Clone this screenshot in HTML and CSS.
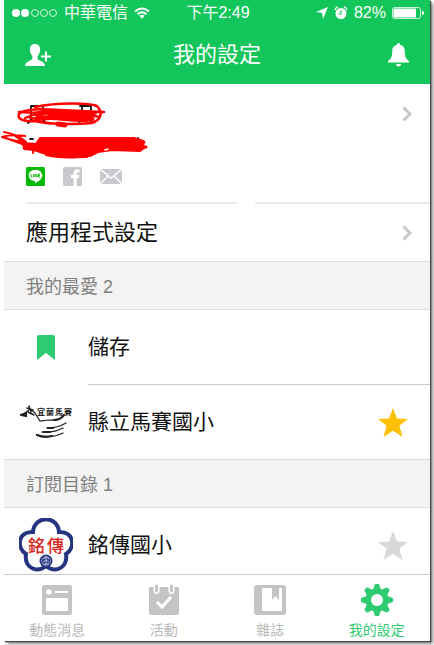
FILE: index.html
```html
<!DOCTYPE html>
<html lang="zh-Hant">
<head>
    <meta charset="UTF-8" />
    <meta name="viewport" content="width=device-width, initial-scale=1">
    <title>我的設定</title>
    <link rel="stylesheet" href="styles.css">
</head>
<body>
    <div class="phone">
        <header>
            <div class="status-bar">
                <div class="status-left">
                    <svg width="46" height="10" viewBox="0 0 46 10" fill="none" stroke="#fff">
                        <circle cx="4" cy="5" r="4" fill="#fff" stroke="none" />
                        <circle cx="13" cy="5" r="4" fill="#fff" stroke="none" />
                        <circle cx="23" cy="5" r="3.5" stroke-width=".8" />
                        <circle cx="32" cy="5" r="3.5" stroke-width=".8" />
                        <circle cx="41" cy="5" r="3.5" stroke-width=".8" />
                    </svg>
                    <span>中華電信</span>
                    <svg width="16" height="12" viewBox="0 0 16 12" fill="none" stroke="#fff" stroke-width="2">
                        <path d="M1 4.5Q8-1.5 15 4.5M3.5 7.2Q8 3.2 12.5 7.2" />
                        <path d="M5.3 8.8Q8 6.6 10.7 8.8L8 11.8Z" fill="#fff" stroke="none" />
                    </svg>
                </div>
                <time>下午2:49</time>
                <div class="status-right">
                    <svg width="12" height="12" viewBox="0 0 12 12" fill="#fff">
                        <path d="M12 0L7 12L6 6L0 5Z" />
                    </svg>
                    <svg width="14" height="14" viewBox="0 0 14 14" fill="none" stroke="#fff">
                        <circle cx="7" cy="7.5" r="5.5" fill="#fff" stroke="none" />
                        <path d="M1 4Q1.5 1.5 4 1M10 1Q12.5 1.5 13 4" stroke-width="1.3" />
                        <path d="M7 4.5V8H4.5" stroke="#13c65b" stroke-width="1.2" />
                    </svg>
                    <span>82%</span>
                    <svg width="32" height="12" viewBox="0 0 32 12">
                        <rect x=".5" y=".5" width="28" height="11" rx="2" fill="none" stroke="#fff" stroke-width=".8" />
                        <rect x="1.5" y="1.5" width="22.5" height="9" rx="1" fill="#fff" />
                        <path d="M30 4Q32 4 32 6T30 8Z" fill="#fff" />
                    </svg>
                </div>
            </div>
            <div class="title-bar">
                <button type="button" aria-label="加入好友">
                    <svg width="26" height="22" viewBox="0 0 26 22" fill="#fff">
                        <path d="M10 0C6.5 0 4.7 2.3 4.9 5.6C5 8.5 6 10.5 7.3 12V15C7.3 16.5 0 17 0 22H20C20 17 12.7 16.5 12.7 15V12C14 10.5 15 8.5 15.1 5.6C15.3 2.3 13.5 0 10 0Z" />
                        <path d="M20 7.5H22V11.5H26V13.5H22V17.5H20V13.5H16V11.5H20Z" />
                    </svg>
                </button>
                <h1>我的設定</h1>
                <button type="button" aria-label="通知">
                    <svg width="21" height="24" viewBox="0 0 21 24" fill="#fff">
                        <path d="M10.5 0C9.5 0 9 .7 9 1.7C5.5 2.5 4.2 5 4.2 8.5C4.2 14 3 16 0 18V19.5H21V18C18 16 16.8 14 16.8 8.5C16.8 5 15.5 2.5 12 1.7C12 .7 11.5 0 10.5 0Z" />
                        <path d="M7.8 21H13.2Q12.5 23.5 10.5 23.5T7.8 21Z" />
                    </svg>
                </button>
            </div>
        </header>

        <main>
            <a class="profile" href="#profile" aria-label="個人資料">
                <svg class="scribble" width="150" height="66" viewBox="0 0 150 66" fill="none" stroke="#f00" stroke-linecap="round" stroke-linejoin="round">
                    <path d="M31 7V22M31 7H43V12M28 24L32 20M46 24L42 20M80 7H91M82 7V22M91 7V24M79 24L82 20M138 39V44M30 40H33" stroke="#111" stroke-width="1.8" />
                    <path d="M35 8C58 3 90 4 97 7C105 16 98 22 92 24C72 26 47 25 35 22C20 23 16 18 20 14C30 7 55 12 104 13M19 13C45 15 74 11 99 18M25 19C43 10 70 12 96 14C75 18 50 22 30 19" stroke-width="2.5" />
                    <path d="M37 15C57 9 74 16 91 14M37 20C56 15 69 23 90 20M45 13L92 20M58 25L65 26" stroke-width="5" />
                    <path d="M4 33C15 35 22 39 26 43C15 43 8 40 2 38C7 36 18 36 25 37M3 38L25 46M14 36L28 47M33 50V54M46 56C60 60 75 58 87 58" stroke-width="2" />
                    <path d="M40 39H134L143 42L144 49L140 52L112 51L98 53L90 57L60 58L46 55L34 51L24 50L23 44L36 45Z" fill="#f00" stroke-width="2" />
                    <path d="M138 43H144M141 49L146 48" stroke-width="3" />
                    <path d="M105 51L108 50" stroke="#fff" stroke-width="1.5" />
                </svg>
                <span class="accounts">
                    <svg width="19" height="19" viewBox="0 0 19 19">
                        <rect width="19" height="19" rx="1.5" fill="#00b900" />
                        <path d="M9.5 2.8C5.5 2.8 2.7 5.2 2.7 8.5C2.7 11.5 5.2 13.7 8.4 14.1C9.3 14.3 9 15 8.8 16.3C12 14.8 16.3 12.3 16.3 8.5C16.3 5.2 13.5 2.8 9.5 2.8Z" fill="#fff" />
                        <path d="M5 7V10H6.5M7.7 7V10M9 10V7L11 10V7M14 7H12.4V10H14M12.4 8.5H14" fill="none" stroke="#00b900" stroke-width=".9" />
                    </svg>
                    <svg width="19" height="19" viewBox="0 0 19 19">
                        <rect width="19" height="19" rx="1.5" fill="#c8c8cd" />
                        <path d="M10.5 19V11H8V8H10.5V6C10.5 3.5 12 2.5 14 2.5H16.5V5.5H15C14 5.5 13.7 6 13.7 6.7V8H16.5L16 11H13.7V19Z" fill="#fff" />
                    </svg>
                    <svg width="22" height="15" viewBox="0 0 22 15">
                        <rect width="22" height="15" fill="#c8c8cd" />
                        <path d="M0 0L11 9L22 0M0 15L8 7M22 15L14 7" fill="none" stroke="#fff" stroke-width="1.5" />
                    </svg>
                </span>
                <svg class="chevron" width="10" height="16" viewBox="0 0 10 16"><path d="M1.5 1.5L8 8L1.5 14.5" /></svg>
            </a>
            <div class="split-line"><i></i><i></i></div>
            <a class="setting" href="#settings">
                <span>應用程式設定</span>
                <svg class="chevron" width="10" height="16" viewBox="0 0 10 16"><path d="M1.5 1.5L8 8L1.5 14.5" /></svg>
            </a>

            <h2>我的最愛 2</h2>
            <ul>
                <li>
                    <span class="thumb">
                        <svg width="18" height="25" viewBox="0 0 18 25"><path d="M2 0H16Q18 0 18 2V25L9 18L0 25V2Q0 0 2 0Z" fill="#2ecc71" /></svg>
                    </span>
                    <div class="cell">
                        <a href="#saved">儲存</a>
                    </div>
                </li>
                <li>
                    <span class="thumb">
                        <svg width="52" height="36" viewBox="0 0 52 36">
                            <g fill="none" stroke="#222" stroke-linecap="round">
                                <path d="M5 9L10 5L15 9L20 17L29 16Q39 17 44 11" stroke-width="1.2" />
                                <path d="M34 16Q41 16 44 11" stroke-width="2" />
                                <path d="M1 11L6 9L6 12Z" fill="#222" stroke-width="2" />
                                <path d="M9 2L11 8M7 4L13 6M8 8L14 11" stroke-width="1.5" />
                                <path d="M27 24Q38 24 46 19M22 28Q34 29 43 24M17 31Q31 35 43 29" stroke-width="1.3" />
                                <path d="M17 31Q24 34 32 32M24 28H30M28 24H33" stroke-width="2.2" />
                            </g>
                            <text class="logo-ink" y="11" x="17 26 35 44">宜蘭馬賽</text>
                        </svg>
                    </span>
                    <div class="cell">
                        <a href="#school-masai">縣立馬賽國小</a>
                        <button type="button" class="star on" aria-label="移除最愛">
                            <svg width="32" height="31" viewBox="0 0 32 31"><path d="M16 1L20 11.5L31 12L22.4 18.7L25.5 30L16 23.7L6.5 30L9.6 18.7L1 12L12 11.5Z" /></svg>
                        </button>
                    </div>
                </li>
            </ul>

            <h2>訂閱目錄 1</h2>
            <ul>
                <li>
                    <span class="thumb">
                        <svg width="54" height="54" viewBox="0 0 54 54">
                            <path d="M14 14C15 -3 39 -3 40 14C55 13 57 30 47 36C49 49 37 56 27 48C17 56 5 49 7 36C-3 30 -1 13 14 14Z" fill="#fff" stroke="#26337f" stroke-width="4" />
                            <circle cx="27" cy="43" r="6.5" fill="#26337f" />
                            <circle cx="27" cy="43" r="4.5" fill="none" stroke="#9ba5d0" stroke-width=".8" />
                            <path d="M27 39V47M24 41L27 39L30 41M24 44L27 42L30 44M24 46H30" fill="none" stroke="#c5cbe5" stroke-width=".9" />
                            <text class="logo-red" y="34" x="9 28">銘傳</text>
                        </svg>
                    </span>
                    <div class="cell">
                        <a href="#school-mingchuan">銘傳國小</a>
                        <button type="button" class="star" aria-label="加入最愛">
                            <svg width="32" height="31" viewBox="0 0 32 31"><path d="M16 1L20 11.5L31 12L22.4 18.7L25.5 30L16 23.7L6.5 30L9.6 18.7L1 12L12 11.5Z" /></svg>
                        </button>
                    </div>
                </li>
            </ul>
        </main>

        <nav>
            <a href="#news">
                <svg width="32" height="32" viewBox="0 0 32 32">
                    <rect x="1" y="1" width="30" height="30" rx="2.5" fill="#c4c4c4" />
                    <circle cx="8" cy="8" r="2.8" fill="#fff" />
                    <path d="M14 7H27V9H14ZM5 14H27V27H5Z" fill="#fff" />
                </svg>
                <span>動態消息</span>
            </a>
            <a href="#events">
                <svg width="32" height="32" viewBox="0 0 32 32">
                    <path d="M1 3H31V29Q31 31 29 31H3Q1 31 1 29Z" fill="#c4c4c4" />
                    <path d="M8.5 1V7M23.5 1V7" stroke="#fff" stroke-width="6" stroke-linecap="round" />
                    <path d="M8.5 2V7M23.5 2V7" stroke="#c4c4c4" stroke-width="3" stroke-linecap="round" />
                    <path d="M9 18L14 23L23 13" fill="none" stroke="#fff" stroke-width="3" />
                </svg>
                <span>活動</span>
            </a>
            <a href="#magazine">
                <svg width="32" height="32" viewBox="0 0 32 32">
                    <rect y="1" width="32" height="30" rx="3" fill="#c4c4c4" />
                    <path d="M8 4H18V16L21.5 12L25 16V4H28V27H8Z" fill="#fff" />
                </svg>
                <span>雜誌</span>
            </a>
            <a href="#me" class="active">
                <svg width="32" height="32" viewBox="0 0 32 32">
                    <g fill="#2ecc71">
                        <circle cx="16" cy="16" r="11.5" />
                        <path id="tooth" d="M14 0H18L20 6H12ZM14 32H18L20 26H12Z" />
                        <use href="#tooth" transform="rotate(45 16 16)" />
                        <use href="#tooth" transform="rotate(90 16 16)" />
                        <use href="#tooth" transform="rotate(135 16 16)" />
                    </g>
                    <circle cx="16" cy="16" r="6" fill="#fff" />
                </svg>
                <span>我的設定</span>
            </a>
        </nav>
    </div>
</body>
</html>
```

FILE: styles.css
```css
* {
    box-sizing: border-box;
}

body {
    font-family: "Liberation Sans", "Noto Sans CJK TC", sans-serif;
    margin: 0;
    padding: 0 4px 4px;
    background: #fff;
    color: #111;
}

a {
    color: inherit;
    text-decoration: none;
}

button {
    background: none;
    border: none;
    padding: 0;
    cursor: pointer;
}

svg {
    display: block;
    flex: none;
}

.phone {
    display: flex;
    flex-direction: column;
    height: calc(100vh - 4px);
    background: #fff;
    box-shadow: 1px 1px 1px #444, 3px 3px 3px #888;
}

header {
    background: #13c65b;
    color: #fff;
}

.status-bar {
    display: grid;
    grid-template-columns: 1fr auto 1fr;
    align-items: center;
    height: 26px;
    padding: 0 6px 0 8px;
    font-size: 16px;
    line-height: 24px;
}

.status-left, .status-right {
    display: flex;
    align-items: center;
    gap: 6px;
}

.status-right {
    justify-content: flex-end;
}

.title-bar {
    display: grid;
    grid-template-columns: 1fr auto 1fr;
    align-items: center;
    height: 58px;
    padding: 0 21px;
}

.title-bar button {
    justify-self: start;
}

.title-bar button:last-child {
    justify-self: end;
}

h1 {
    margin: 0;
    font-size: 22px;
    line-height: 58px;
    font-weight: 400;
}

main {
    flex: 1;
    min-height: 0;
    overflow-y: auto;
    scrollbar-width: none;
}

.profile {
    display: flex;
    justify-content: space-between;
    align-items: flex-start;
    height: 118px;
    padding: 22px 18px 16px 22px;
}

/* runs past the left edge of the screen */
.scribble {
    position: absolute;
    top: 99px;
    left: 0;
}

.accounts {
    display: flex;
    align-items: center;
    align-self: flex-end;
    gap: 18px;
}

.chevron {
    fill: none;
    stroke: #c7c7c7;
    stroke-width: 3;
}

.split-line {
    display: flex;
    gap: 18px;
    padding-left: 22px;
}

.split-line i {
    flex: 6;
    height: 2px;
    background: #eaeaea;
}

.split-line i:last-child {
    flex: 5;
}

.setting {
    display: flex;
    align-items: center;
    justify-content: space-between;
    padding: 0 18px 0 22px;
    font-size: 22px;
    line-height: 57px;
}

h2 {
    margin: 0;
    height: 49px;
    line-height: 50px;
    padding-left: 22px;
    background: #f3f3f3;
    border-top: 1px solid #ddd;
    border-bottom: 1px solid #ddd;
    color: #808080;
    font-size: 18px;
    font-weight: 400;
}

ul {
    list-style: none;
    margin: 0;
    padding: 0;
}

li {
    display: flex;
    align-items: center;
}

.thumb {
    display: flex;
    justify-content: center;
    width: 84px;
}

.cell {
    flex: 1;
    display: flex;
    align-items: center;
    justify-content: space-between;
    padding-right: 21px;
    font-size: 21px;
    line-height: 74px;
}

li + li .cell {
    border-top: 1px solid #ccc;
}

.star {
    fill: #d8d8d8;
}

.star.on {
    fill: #ffc107;
}

.logo-ink {
    font-size: 8px;
    font-weight: 700;
    fill: #222;
}

.logo-red {
    font-family: "Noto Sans CJK TC", sans-serif;
    font-size: 17px;
    font-weight: 500;
    fill: #d9261c;
}

nav {
    display: grid;
    grid-template-columns: repeat(4, 1fr);
    height: 67px;
    padding-top: 9px;
    border-top: 1px solid #ccc;
    background: #fff;
}

nav a {
    display: flex;
    flex-direction: column;
    align-items: center;
    gap: 5px;
    color: #b8b8b8;
    font-size: 14px;
    line-height: 18px;
}

nav a.active {
    color: #2ecc71;
}
```
